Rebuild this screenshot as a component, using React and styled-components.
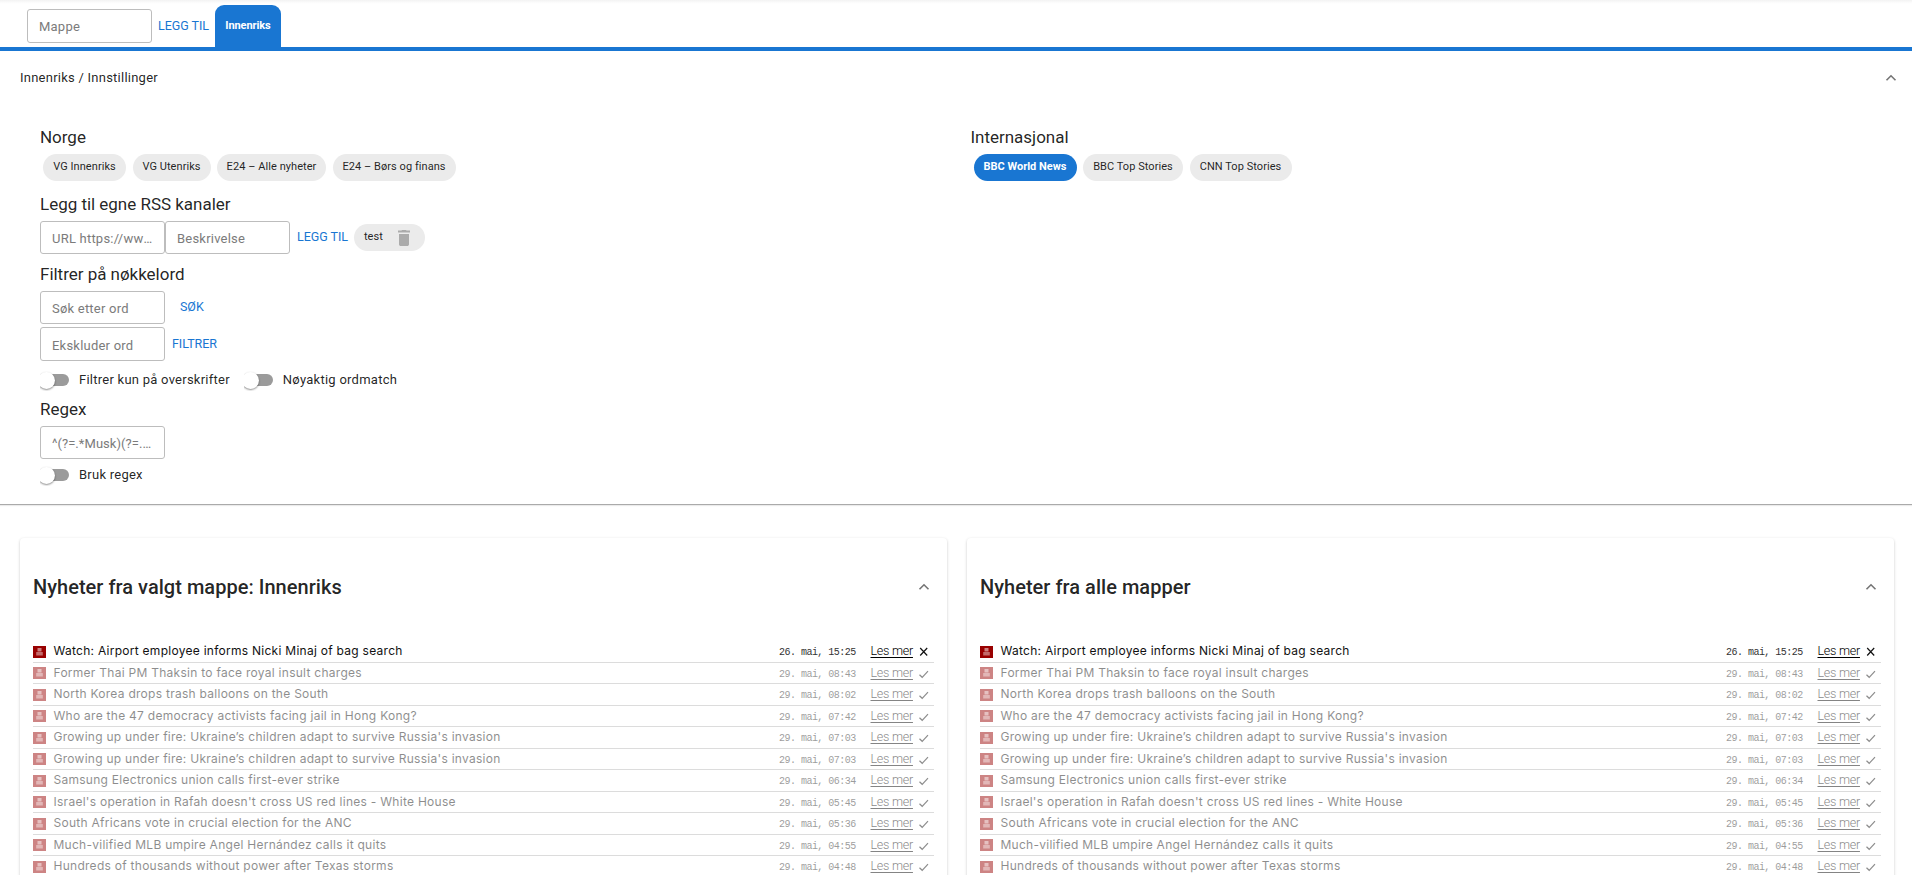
import React from "react";
import styled, { createGlobalStyle, css } from "styled-components";

const Global = createGlobalStyle`
  * { box-sizing: border-box; }
  body { margin: 0; background: #fff; overflow: hidden; font-family: Roboto, "Liberation Sans", sans-serif; color: rgba(0,0,0,.87); }
`;
const Page = styled.div`height: 875px; overflow: hidden; display: flex; flex-direction: column;`;
const TopBar = styled.header`
  flex: none; height: 51px; border-bottom: 4px solid #1976d2; padding: 5px 0 0 27px;
  display: flex; align-items: flex-start;
  background: linear-gradient(#f3f3f3, #fdfdfd 3px, #fff 4px);
`;
const Field = styled.input`
  display: block; width: 125px; height: ${p => p.$h || 33}px; margin: ${p => p.$m || 0}; padding: ${p => p.$pt ?? 2}px 11px 0;
  border: 1px solid #bdbdbd; border-radius: 3px; background: #fff; outline: 0;
  font: 400 13px Roboto, sans-serif; letter-spacing: ${p => p.$ls || ".22px"}; text-overflow: ellipsis;
  &::placeholder { color: #7b7b7b; opacity: 1; text-overflow: ellipsis; }
`;
const TextButton = styled.button`
  border: 0; background: none; padding: 0; margin: ${p => p.$m || 0}; color: #1976d2;
  font: 400 12.5px/18px Roboto, sans-serif; letter-spacing: -.05px; text-transform: uppercase; white-space: nowrap;
`;
const Tab = styled.button`
  width: 66px; height: 42px; border: 0; border-radius: 9px 9px 0 0; background: #1976d2; color: #fff; padding: 15px 0 0;
  font: 700 11px/12px Roboto, sans-serif; letter-spacing: -.1px; display: flex; justify-content: center; margin-left: 6px;
`;
const Settings = styled.section`
  flex: none; height: 454px; border-bottom: 1px solid #aaa; box-shadow: 0 1px 1px rgba(0,0,0,.08);
`;
const SettingsHead = styled.div`
  height: 54px; padding: 0 15px 0 20px; display: flex; align-items: center; justify-content: space-between;
  font-size: 13px; line-height: 16px; letter-spacing: .24px;
  > span { padding-bottom: 1px; }
`;
const Columns = styled.div`display: grid; grid-template-columns: 930.5px 1fr; padding: 22px 0 0 40px;`;
const Heading = styled.h2`margin: ${p => p.$m || 0}; font-size: 17px; line-height: 20px; font-weight: 400; letter-spacing: -.02px;`;
const ChipRow = styled.div`display: flex; gap: 6.5px; margin: 7px 0 0 3px;`;
const Chip = styled.span`
  height: 27px; width: ${p => p.$w}px; border-radius: 14px; background: #ebebeb; font-size: 11px; line-height: 26px; letter-spacing: .06px;
  display: flex; justify-content: center; white-space: nowrap;
  ${p => p.$on && css`background: #1976d2; color: #fff; font-weight: 700; letter-spacing: 0;`}
  ${p => p.$removable && css`justify-content: space-between; padding: 0 15px 0 10px; margin-top: 3px;`}
`;
const TrashSlot = styled.span`display: flex; padding-top: 5px;`;
const Line = styled.div`display: flex; align-items: flex-start;`;
const Toggles = styled.div`display: flex; align-items: center; gap: 14px; height: 20px; margin-top: ${p => p.$t}px;`;
const ToggleLabel = styled.label`display: flex; align-items: center; gap: 10px; font-size: 13px; letter-spacing: .25px; line-height: 20px;`;
const Switch = styled.span`
  width: 29px; height: 22px; display: flex; align-items: center; overflow: hidden;
  &::before { content: ""; flex: none; width: 17px; height: 17px; border-radius: 50%; background: #fff; box-shadow: 0 1px 2px rgba(0,0,0,.45); z-index: 1; margin-left: -2px; }
  &::after { content: ""; flex: none; width: 20px; height: 12px; margin-left: -6px; border-radius: 0 6px 6px 0; background: #9b9b9b; }
`;
const Feeds = styled.main`display: grid; grid-template-columns: 1fr 1fr; gap: 20px; padding: 33px 18px 0 20px; height: 370px;`;
const Card = styled.article`
  height: 400px; padding: 0 13.5px 0 13px; border-radius: 4px; box-shadow: 0 1px 3px rgba(0,0,0,.22);
`;
const CardHead = styled.div`height: 98px; display: flex; align-items: center; justify-content: space-between; padding-right: 4px;`;
const CardTitle = styled.h1`margin: 0; font-size: 20px; line-height: 24px; font-weight: 500; letter-spacing: .03px;`;
const List = styled.ul`list-style: none; margin: 0; padding: 5px 0 0;`;
const Item = styled.li`
  height: 21.5px; border-bottom: 1px solid #dcdcdc; display: grid; grid-template-columns: 20.5px 1fr 91.5px 47.5px 15.5px; align-items: center;
  > * { opacity: ${p => (p.$read ? 0.48 : 1)}; }
`;
const Title = styled.span`font: 400 12px/18px Inter, "Open Sans", sans-serif; color: #111; white-space: nowrap; letter-spacing: .27px; padding-bottom: 1px;`;
const Time = styled.time`font: 400 10px/18px "Liberation Mono", monospace; letter-spacing: -.52px; white-space: pre; padding-top: 3px; color: #333;`;
const More = styled.a`
  justify-self: start; font: 300 12.5px/18px Roboto, sans-serif; letter-spacing: -.25px; color: #000; white-space: nowrap; padding-bottom: 1px;
  text-decoration: underline; text-underline-offset: 2px;
`;

const Chevron = () => (
  <svg width="12" height="12" viewBox="0 0 12 12" fill="none" stroke="#757575" strokeWidth="1.6"><path d="M1.5 8.3 6 3.8l4.5 4.5" /></svg>
);
const Trash = () => (
  <svg width="12" height="17" viewBox="0 0 12 17" fill="#ababab"><path d="M0 1.500h3.300L4.200 1h3.600l.9.500H12v2H0zM1 5h10v10.200c0 1-.8 1.800-1.800 1.800H2.800C1.800 17 1 16.200 1 15.200z" /></svg>
);
const SourceIcon = () => (
  <svg width="13" height="12" viewBox="0 0 13 12"><path fill="#900" d="M0 0h13v12H0z" /><g fill="#fff"><path opacity=".5" d="M4.500 2h4v3.500h-4z" /><path opacity=".42" d="M3.200 6H6v3.500H3.200zM6 6h.8v3.500H6zM6.800 6h3v3.500h-3z" /></g></svg>
);
const Mark = ({ read }) => (
  <svg width="11" height="11" viewBox="0 0 11 11" fill="none" stroke="#111" strokeWidth="1.2">
    <path d={read ? "M1.500 6.800 4.200 9.300 10 3.200" : "M2.200 2l7 7.500M9.200 2l-7 7.500"} />
  </svg>
);

const news = [
  ["Watch: Airport employee informs Nicki Minaj of bag search", "26. mai, 15:25"],
  ["Former Thai PM Thaksin to face royal insult charges", "29. mai, 08:43"],
  ["North Korea drops trash balloons on the South", "29. mai, 08:02"],
  ["Who are the 47 democracy activists facing jail in Hong Kong?", "29. mai, 07:42"],
  ["Growing up under fire: Ukraine’s children adapt to survive Russia's invasion", "29. mai, 07:03"],
  ["Growing up under fire: Ukraine’s children adapt to survive Russia's invasion", "29. mai, 07:03"],
  ["Samsung Electronics union calls first-ever strike", "29. mai, 06:34"],
  ["Israel's operation in Rafah doesn't cross US red lines - White House", "29. mai, 05:45"],
  ["South Africans vote in crucial election for the ANC", "29. mai, 05:36"],
  ["Much-vilified MLB umpire Angel Hernández calls it quits", "29. mai, 04:55"],
  ["Hundreds of thousands without power after Texas storms", "29. mai, 04:48"],
];

const Toggle = ({ children }) => <ToggleLabel><Switch />{children}</ToggleLabel>;

const Feed = ({ title }) => (
  <Card>
    <CardHead><CardTitle>{title}</CardTitle><Chevron /></CardHead>
    <List>
      {news.map(([text, time], i) => (
        <Item key={i} $read={i > 0}>
          <SourceIcon />
          <Title>{text}</Title>
          <Time>{time}</Time>
          <More>Les mer</More>
          <Mark read={i > 0} />
        </Item>
      ))}
    </List>
  </Card>
);

export default function App() {
  return (
    <Page>
      <Global />
      <TopBar>
        <Field placeholder="Mappe" $m="4px 0 0" $h={34} $pt={0} />
        <TextButton $m="12px 0 0 6px">Legg til</TextButton>
        <Tab>Innenriks</Tab>
      </TopBar>
      <Settings>
        <SettingsHead><span>Innenriks / Innstillinger</span><Chevron /></SettingsHead>
        <Columns>
          <div>
            <Heading>Norge</Heading>
            <ChipRow><Chip $w={83}>VG Innenriks</Chip><Chip $w={78}>VG Utenriks</Chip><Chip $w={109}>E24 – Alle nyheter</Chip><Chip $w={123}>E24 – Børs og finans</Chip></ChipRow>
            <Heading $m="13px 0 7px">Legg til egne RSS kanaler</Heading>
            <Line>
              <Field placeholder="URL https://www.vg.no/rss" /><Field placeholder="Beskrivelse" />
              <TextButton $m="7px 6px 0 7px">Legg til</TextButton>
              <Chip $w={71} $removable>test<TrashSlot><Trash /></TrashSlot></Chip>
            </Line>
            <Heading $m="10px 0 7px">Filtrer på nøkkelord</Heading>
            <Line><Field placeholder="Søk etter ord" /><TextButton $m="7px 0 0 15px">Søk</TextButton></Line>
            <Line><Field placeholder="Ekskluder ord" $m="3px 0 0" $h={34} /><TextButton $m="11px 0 0 7px">Filtrer</TextButton></Line>
            <Toggles $t={9}><Toggle>Filtrer kun på overskrifter</Toggle><Toggle>Nøyaktig ordmatch</Toggle></Toggles>
            <Heading $m="9px 0 7px">Regex</Heading>
            <Field placeholder="^(?=.*Musk)(?=.*Tesla)" $ls=".05px" />
            <Toggles $t={6}><Toggle>Bruk regex</Toggle></Toggles>
          </div>
          <div>
            <Heading>Internasjonal</Heading>
            <ChipRow><Chip $w={103} $on>BBC World News</Chip><Chip $w={100}>BBC Top Stories</Chip><Chip $w={102}>CNN Top Stories</Chip></ChipRow>
          </div>
        </Columns>
      </Settings>
      <Feeds>
        <Feed title="Nyheter fra valgt mappe: Innenriks" />
        <Feed title="Nyheter fra alle mapper" />
      </Feeds>
    </Page>
  );
}
